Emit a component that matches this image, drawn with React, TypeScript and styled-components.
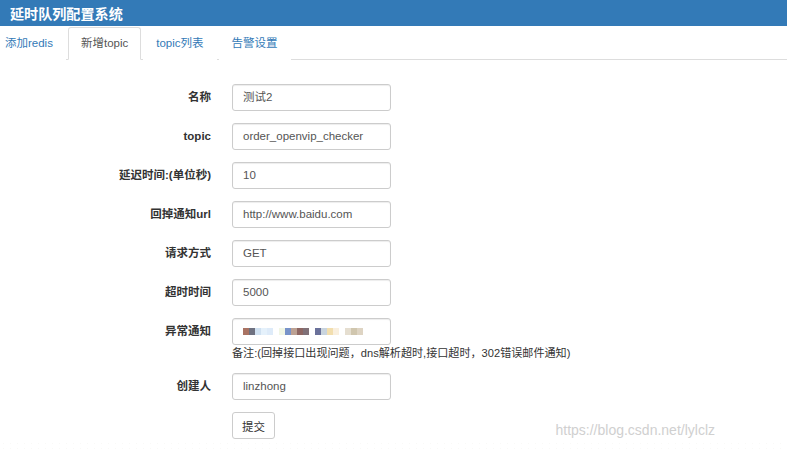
import React from "react";
import styled, { createGlobalStyle } from "styled-components";

const GlobalStyle = createGlobalStyle`
  body {
    margin: 0;
    background: #fff;
    font-family: "Liberation Sans", "Noto Sans CJK SC", sans-serif;
    font-size: 11.5px;
    color: #333;
  }
`;

const Page = styled.div`
  position: relative;
  width: 787px;
  height: 454px;
  overflow: hidden;
`;

const Header = styled.div`
  height: 26px;
  background: #337ab7;
  display: flex;
  align-items: center;
  padding-left: 10px;
`;

const Brand = styled.div`
  color: #fff;
  font-weight: bold;
  font-size: 14.1px;
`;

const Tabs = styled.ul`
  list-style: none;
  margin: 0 0 0 -8px;
  padding: 1px 0 0;
  display: flex;
  border-bottom: 1px solid #ddd;
`;

const Tab = styled.li<{ $active?: boolean }>`
  margin: 0 2px -1px 0;
  padding: 0 12px;
  line-height: 31px;
  border: 1px solid ${p => (p.$active ? "#ddd" : "transparent")};
  border-bottom-color: ${p => (p.$active ? "#fff" : "transparent")};
  border-radius: 3px 3px 0 0;
  background: #fff;
  color: ${p => (p.$active ? "#555" : "#337ab7")};
`;

const Form = styled.form`
  display: grid;
  grid-template-columns: 211px 1fr;
  column-gap: 21px;
  padding-top: 24px;
`;

const Label = styled.label`
  font-weight: bold;
  font-size: 11.5px;
  text-align: right;
  height: 27px;
  line-height: 27px;
  color: #333;
`;

const Field = styled.div`
  margin-bottom: 12px;
`;

const Input = styled.div`
  box-sizing: border-box;
  width: 159px;
  height: 27px;
  padding: 0 10px;
  border: 1px solid #ccc;
  border-radius: 3px;
  box-shadow: inset 0 1px 1px rgba(0, 0, 0, 0.075);
  line-height: 25px;
  color: #555;
  display: flex;
  align-items: center;
`;

const Help = styled.div`
  margin-top: 1px;
  line-height: 15px;
  font-size: 11.1px;
  color: #333;
  white-space: nowrap;
`;

const Blur = styled.span<{ $c: string }>`
  display: inline-block;
  width: 6px;
  height: 7px;
  background: ${p => p.$c};
  opacity: 0.85;
`;

const Button = styled.button`
  box-sizing: border-box;
  width: 43px;
  height: 27px;
  padding: 0;
  background: #fff;
  border: 1px solid #ccc;
  border-radius: 3px;
  font-family: inherit;
  font-size: 11.5px;
  color: #333;
`;

const Watermark = styled.div`
  position: absolute;
  right: 72px;
  top: 422px;
  font-size: 14px;
  color: #d0d0d0;
`;

const Speckle = styled.div`
  position: absolute;
  left: 0;
  right: 0;
  top: 441px;
  height: 8px;
  background-image: radial-gradient(circle, rgba(190, 190, 180, 0.25) 0.5px, transparent 1px);
  background-size: 7px 5px;
  opacity: 0.4;
`;

const blurColors = [
  "#9a5a48", "#55586a", "#c8dcee", "#e0eefa", "#d8e8f8", "transparent",
  "#eef4e0", "#6080c0", "#b09080", "#7a4c48", "#6a5860", "transparent",
  "#505888", "#c0ccd8", "#f0d8a0", "#f8ecd8", "transparent",
  "#e0d8c8", "#c8bca0", "#d8ccb8",
];

const rows: [string, string][] = [
  ["名称", "测试2"],
  ["topic", "order_openvip_checker"],
  ["延迟时间:(单位秒)", "10"],
  ["回掉通知url", "http://www.baidu.com"],
  ["请求方式", "GET"],
  ["超时时间", "5000"],
];

const App = () => (
  <Page>
    <GlobalStyle />
    <Header>
      <Brand>延时队列配置系统</Brand>
    </Header>
    <Tabs>
      <Tab>添加redis</Tab>
      <Tab $active>新增topic</Tab>
      <Tab>topic列表</Tab>
      <Tab>告警设置</Tab>
    </Tabs>
    <Form>
      {rows.map(([label, value]) => (
        <React.Fragment key={label}>
          <Label>{label}</Label>
          <Field>
            <Input>{value}</Input>
          </Field>
        </React.Fragment>
      ))}
      <Label>异常通知</Label>
      <Field>
        <Input>
          {blurColors.map((c, i) => (
            <Blur key={i} $c={c} />
          ))}
        </Input>
        <Help>备注:(回掉接口出现问题，dns解析超时,接口超时，302错误邮件通知)</Help>
      </Field>
      <Label>创建人</Label>
      <Field>
        <Input>linzhong</Input>
      </Field>
      <span />
      <Field>
        <Button type="button">提交</Button>
      </Field>
    </Form>
    <Speckle />
    <Watermark>https://blog.csdn.net/lylclz</Watermark>
  </Page>
);

export default App;
